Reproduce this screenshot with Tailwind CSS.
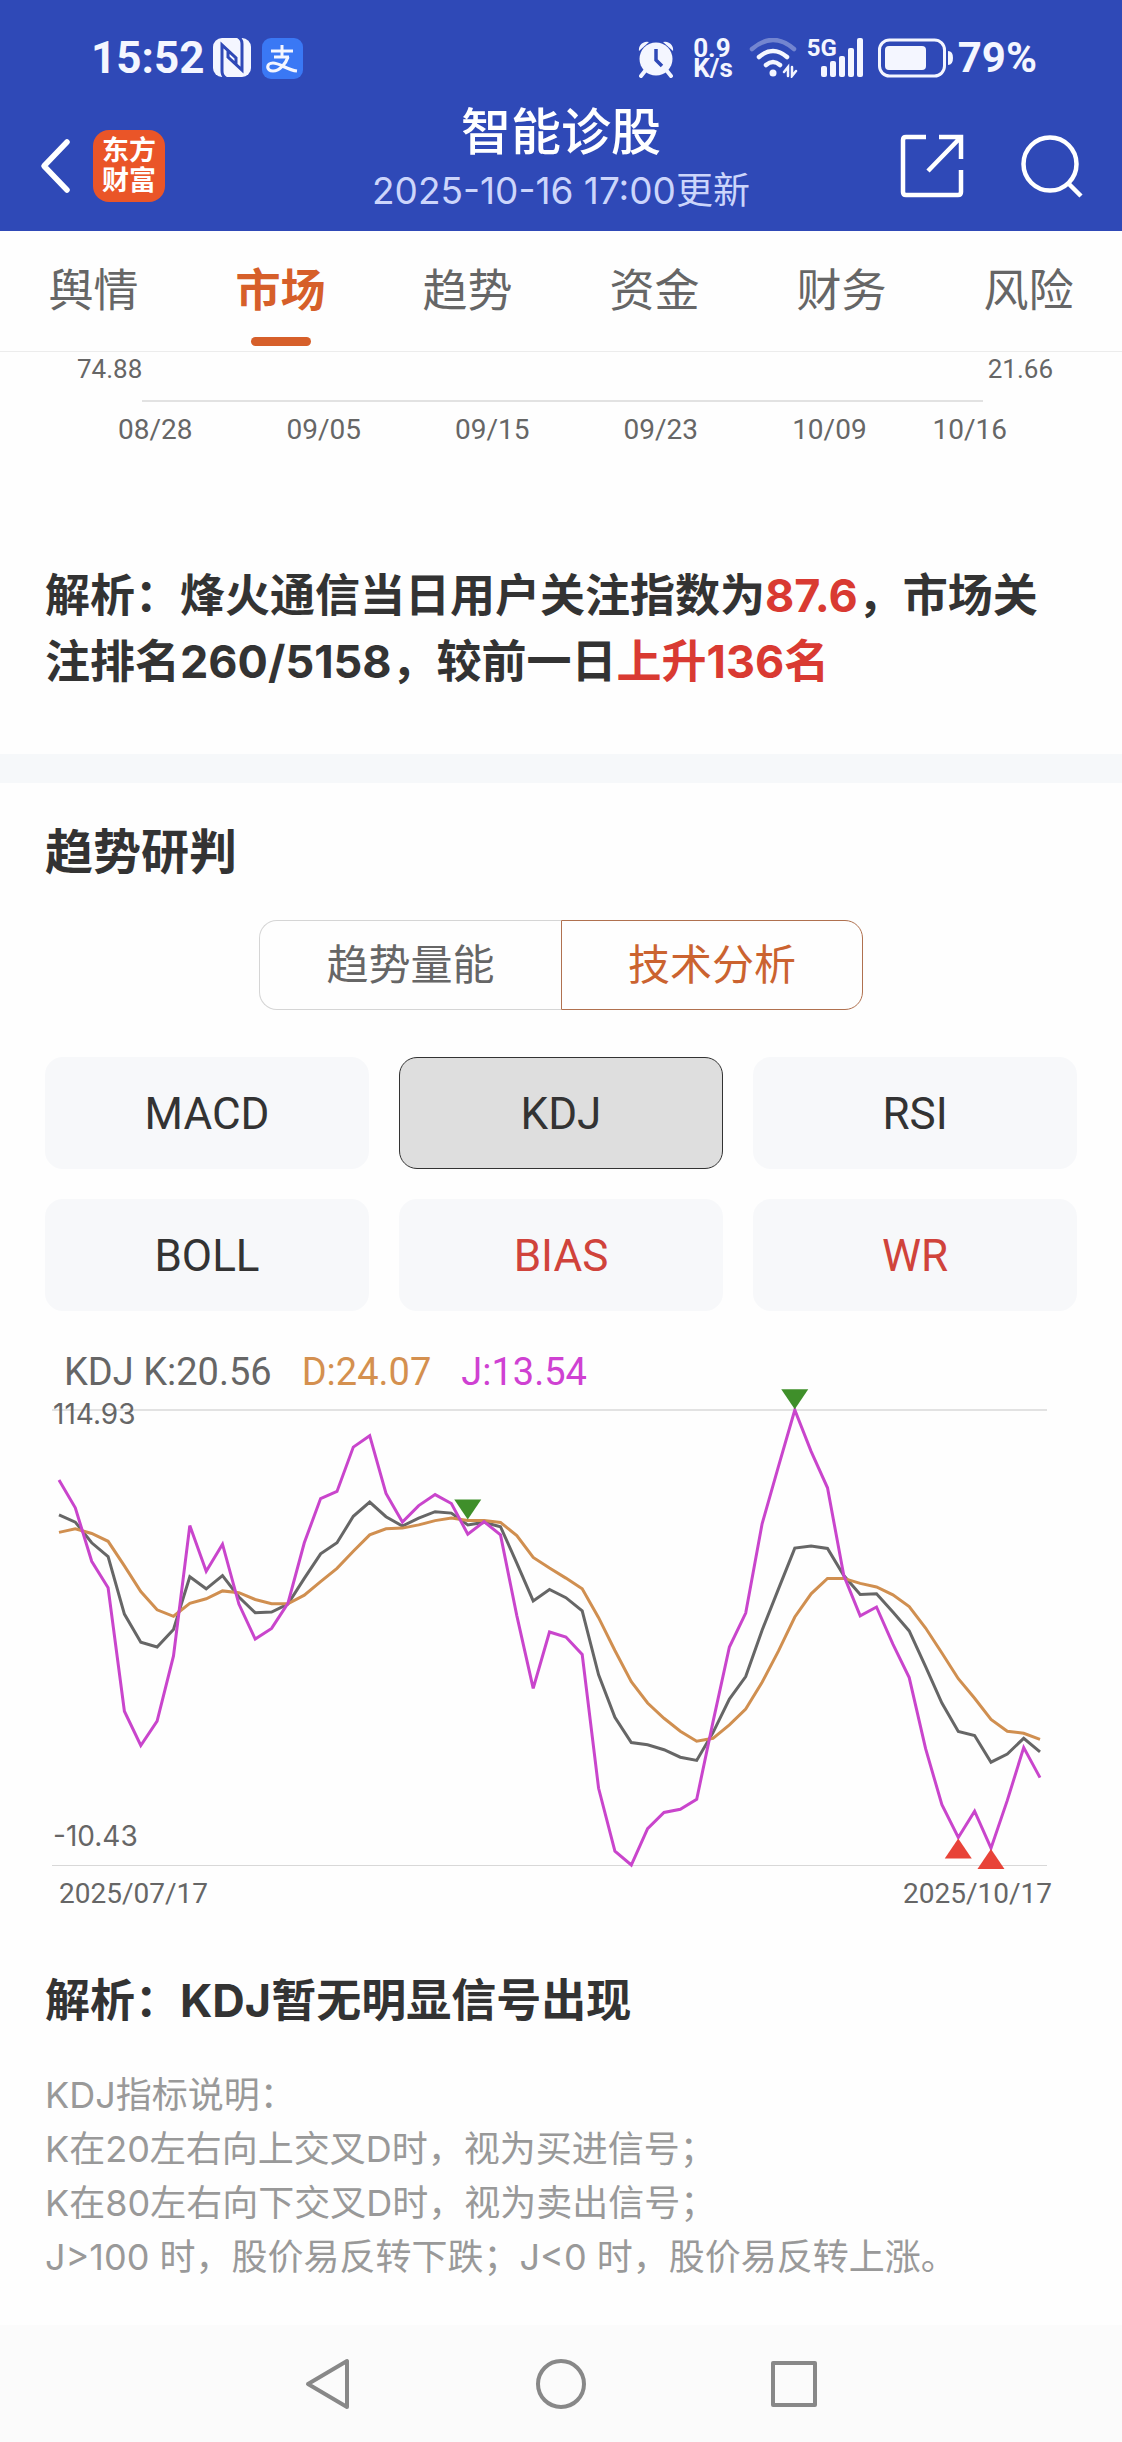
<!DOCTYPE html>
<html lang="zh-CN">

<head>
    <meta charset="UTF-8">
    <meta name="viewport" content="width=device-width, initial-scale=1.0">
    <script src="https://cdn.jsdelivr.net/npm/@tailwindcss/browser@4"></script>
    <title>智能诊股</title>
</head>

<body class="bg-[#fefefe] font-[Roboto,'Noto_Sans_CJK_SC',sans-serif] text-[#333]">
    <header class="bg-[#2f49b7] pt-9 text-white">
        <!-- status bar -->
        <div class="flex h-11 items-center justify-between pr-[85px] pl-[91px] text-[#f4f6ff]">
            <div class="flex items-center">
                <span class="text-[44px] leading-[44px] font-bold">15:52</span>
                <svg class="ml-2 h-10 w-10" viewBox="0 0 40 40">
                    <rect x="1" y="0" width="38" height="39" rx="9" fill="#f4f6ff" />
                    <path d="M14 40q-4-2-4-7V7l14 13v6M26-1q4 2 4 7v26L16 19v-6" fill="none" stroke="#2f49b7"
                        stroke-width="3" />
                </svg>
                <svg class="ml-[10px] h-[41px] w-[41px]" viewBox="0 0 41 41" fill="none" stroke="#f4f6ff">
                    <rect width="41" height="41" rx="9" fill="#3a78f5" stroke="none" />
                    <path d="M9 13h22M20 7v12M12 19h15" stroke-width="3" />
                    <path d="M26 19c-2 6-8 14-15 14-7 0-7-8 0-8 7 0 14 7 24 8" stroke-width="3.2" />
                </svg>
            </div>
            <div class="flex items-center">
                <svg class="h-10 w-9" viewBox="0 0 36 40" fill="#f4f6ff">
                    <circle cx="18" cy="21" r="16.5" />
                    <path d="M1 13a8 8 0 0 1 10-9zM35 13a8 8 0 0 0-10-9z" />
                    <path d="M7 33l-4 5M29 33l4 5" stroke="#f4f6ff" stroke-width="4" stroke-linecap="round" />
                    <path d="M18 11v11l6 6" fill="none" stroke="#2f49b7" stroke-width="3.5" />
                </svg>
                <div class="ml-[19px] text-[26px] leading-5 font-bold">
                    <div>0.9</div>
                    <div>K/s</div>
                </div>
                <svg class="ml-4 h-10 w-[50px]" viewBox="0 0 50 40" fill="none" stroke="#f4f6ff" stroke-width="4.5"
                    stroke-linecap="round">
                    <path d="M3 11q21-18 42 0" opacity=".35" />
                    <path d="M10 19q14-12 28 0M17 27q7-6 14 0" />
                    <circle cx="24" cy="35" r="3.5" fill="#f4f6ff" stroke="none" />
                    <path d="M35 34l4-5v9M43 29v9l4-5" stroke-width="2.5" />
                </svg>
                <div class="relative ml-2 h-10 w-[58px]">
                    <span class="absolute -top-1 left-0 text-2xl leading-7 font-bold">5G</span>
                    <svg class="h-10 w-[58px]" viewBox="0 0 58 40" fill="#f4f6ff">
                        <rect x="14" y="28" width="6" height="11" rx="2" />
                        <rect x="23" y="23" width="6" height="16" rx="2" />
                        <rect x="32" y="18" width="6" height="21" rx="2" />
                        <rect x="41" y="10" width="6" height="29" rx="2" />
                        <rect x="50" y="0" width="6" height="39" rx="2" />
                    </svg>
                </div>
                <svg class="ml-[13px] h-10 w-[76px]" viewBox="0 0 76 40" fill="#f4f6ff">
                    <rect x="1.5" y="2" width="65" height="36" rx="10" fill="none" stroke="#f4f6ff" stroke-width="3" />
                    <rect x="7" y="8" width="41" height="24" rx="4" />
                    <path d="M70 13q5 0 5 7t-5 7z" />
                </svg>
                <span class="ml-1 text-[42px] leading-[44px] font-bold">79%</span>
            </div>
        </div>

        <!-- title bar -->
        <div class="mt-5 grid grid-cols-[1fr_auto_1fr] items-center">
            <div class="flex items-center pl-10">
                <button type="button" aria-label="返回">
                    <svg class="h-14 w-8" viewBox="0 0 32 56" fill="none" stroke="#fff" stroke-width="5.5"
                        stroke-linecap="round" stroke-linejoin="round">
                        <path d="M27 4L4 28l23 24" />
                    </svg>
                </button>
                <div
                    class="ml-[21px] flex h-[72px] w-[72px] flex-col justify-center rounded-2xl bg-[#ea5528] text-center text-[27px] leading-[30px] font-bold">
                    <span>东方</span>
                    <span>财富</span>
                </div>
            </div>
            <div class="pt-0.5 pb-[11px] text-center font-[Inter,'Noto_Sans_CJK_SC',sans-serif]">
                <h1 class="text-[50px] leading-[60px] font-medium">智能诊股</h1>
                <p class="text-[37px] leading-[58px] text-[#ccd5fb]">2025-10-16 17:00更新</p>
            </div>
            <div class="flex items-center justify-end gap-14 pr-[38px]">
                <button type="button" aria-label="分享">
                    <svg class="h-16 w-16" viewBox="0 0 64 64" fill="none" stroke="#fff" stroke-width="4.5">
                        <path d="M26 3H6q-3 0-3 3v52q0 3 3 3h52q3 0 3-3V36" />
                        <path d="M39 3h22v22M61 3L28 37" />
                    </svg>
                </button>
                <button type="button" aria-label="搜索">
                    <svg class="h-16 w-16" viewBox="0 0 64 64" fill="none" stroke="#fff" stroke-width="4.5">
                        <circle cx="30" cy="30" r="26.5" />
                        <path d="M48 49l13 13" />
                    </svg>
                </button>
            </div>
        </div>
    </header>

    <!-- tabs -->
    <nav class="grid h-[121px] grid-cols-6 border-b border-[#ececec] text-center text-[45px] leading-[66px] text-[#666]">
        <a href="#" class="pt-7">舆情</a>
        <a href="#" class="flex flex-col items-center pt-7 font-bold text-[#d65f2a]">市场
            <span class="mt-3 h-[9px] w-[60px] rounded-full bg-[#d65f2a]"></span>
        </a>
        <a href="#" class="pt-7">趋势</a>
        <a href="#" class="pt-7">资金</a>
        <a href="#" class="pt-7">财务</a>
        <a href="#" class="pt-7">风险</a>
    </nav>

    <main>
        <section>
            <div class="flex justify-between pt-px pr-[69px] pl-[77px] text-[26px] leading-8 text-[#666]">
                <span>74.88</span>
                <span>21.66</span>
            </div>
            <div class="mt-[15px] mr-[139px] ml-[142px] h-0.5 bg-[#e2e2e2]"></div>
            <div
                class="mt-2 grid grid-cols-[3fr_3fr_3fr_3fr_3fr_2fr] pr-24 pl-[71px] text-center text-[28px] leading-10 text-[#666]">
                <span>08/28</span>
                <span>09/05</span>
                <span>09/15</span>
                <span>09/23</span>
                <span>10/09</span>
                <span>10/16</span>
            </div>
            <p class="mx-[45px] mt-[113px] font-[Inter,'Noto_Sans_CJK_SC',sans-serif] text-[45px] leading-[66px] font-bold">解析：烽火通信当日用户关注指数为<span
                    class="text-[#d93a32]">87.6</span>，市场关注排名260/5158，较前一日<span class="text-[#d93a32]">上升136名</span></p>
        </section>

        <div class="mt-[59px] h-[29px] bg-[#f6f8fa]"></div>

        <section class="px-[45px] pt-[46px]">
            <h2 class="text-[48px] leading-[48px] font-bold">趋势研判</h2>
            <div class="mx-auto mt-[43px] grid h-[90px] w-[604px] grid-cols-2 text-[42px]">
                <button type="button"
                    class="rounded-l-[18px] border border-r-0 border-[#d5d5d5] text-[#666]">趋势量能</button>
                <button type="button" class="rounded-r-[18px] border border-[#b0714f] text-[#cb6330]">技术分析</button>
            </div>
            <div class="mt-[47px] grid grid-cols-3 gap-[30px] text-[44px]">
                <button type="button" class="h-28 rounded-[18px] bg-[#f7f8fa] pt-0.5">MACD</button>
                <button type="button" class="h-28 rounded-[18px] border border-[#333] bg-[#dedede] pt-0.5">KDJ</button>
                <button type="button" class="h-28 rounded-[18px] bg-[#f7f8fa] pt-0.5">RSI</button>
                <button type="button" class="h-28 rounded-[18px] bg-[#f7f8fa] pt-0.5">BOLL</button>
                <button type="button" class="h-28 rounded-[18px] bg-[#f7f8fa] pt-0.5 text-[#d0433b]">BIAS</button>
                <button type="button" class="h-28 rounded-[18px] bg-[#f7f8fa] pt-0.5 text-[#d0433b]">WR</button>
            </div>
        </section>

        <section>
            <div class="mt-[45px] flex gap-[30px] pl-16 text-[38px] leading-8 text-[#666]">
                <span>KDJ K:20.56</span>
                <span class="text-[#d4904f]">D:24.07</span>
                <span class="text-[#cf41d2]">J:13.54</span>
            </div>
            <svg class="block w-full" viewBox="0 0 1122 484" fill="none">
                <path d="M52 22H1047" stroke="#e2e2e2" stroke-width="2" />
                <path d="M52 477.5H1047" stroke="#d8d8d8" />
                <g id="lines" stroke-width="3"></g>
                <g id="markers"></g>
                <text x="53" y="36" class="fill-[#666] font-[Inter] text-[28px]">114.93</text>
                <text x="53" y="458" class="fill-[#666] font-[Inter] text-[28px]">-10.43</text>
            </svg>
            <div class="mt-0.5 flex justify-between pr-[70px] pl-[59px] text-[28px] leading-10 text-[#666]">
                <span>2025/07/17</span>
                <span>2025/10/17</span>
            </div>
            <h3 class="mx-[45px] mt-[54px] font-[Inter,'Noto_Sans_CJK_SC',sans-serif] text-[45px] leading-[66px] font-bold">解析：KDJ暂无明显信号出现</h3>
            <p class="mx-[45px] mt-[34px] font-[Inter,'Noto_Sans_CJK_SC',sans-serif] text-4xl leading-[54px] text-[#999]">
                KDJ指标说明：<br>
                K在20左右向上交叉D时，视为买进信号；<br>
                K在80左右向下交叉D时，视为卖出信号；<br>
                J&gt;100 时，股价易反转下跌；J&lt;0 时，股价易反转上涨。
            </p>
        </section>
    </main>

    <!-- system navigation -->
    <footer class="mt-[41px] flex h-[117px] items-center justify-center gap-[181px] bg-[#fbfbfb]">
        <button type="button" aria-label="后退">
            <svg class="h-[52px] w-[52px]" viewBox="0 0 52 52" fill="none" stroke="#888" stroke-width="4"
                stroke-linejoin="round">
                <path d="M45 3v46L6 26z" />
            </svg>
        </button>
        <button type="button" aria-label="主页">
            <svg class="h-[52px] w-[52px]" viewBox="0 0 52 52" fill="none" stroke="#888" stroke-width="4">
                <circle cx="26" cy="26" r="23" />
            </svg>
        </button>
        <button type="button" aria-label="最近任务">
            <svg class="h-[52px] w-[52px]" viewBox="0 0 52 52" fill="none" stroke="#888" stroke-width="4"
                stroke-linejoin="round">
                <rect x="5" y="5" width="42" height="42" />
            </svg>
        </button>
    </footer>

    <script>
        const K = [490, 510, 568, 607, 768, 847, 860, 811, 663, 697, 660, 720, 764, 762, 740, 668, 599, 568, 494, 454,
            495, 521, 499, 481, 485, 518, 511, 523, 625, 731, 699, 722, 759, 938, 1057, 1128, 1134, 1148, 1169, 1178,
            1100, 1006, 943, 813, 698, 583, 577, 584, 660, 713, 711, 762, 815, 915, 1017, 1097, 1108, 1183, 1160, 1116, 1154];
        const D = [539, 529, 542, 564, 633, 705, 756, 774, 738, 725, 703, 708, 727, 739, 739, 715, 677, 640, 592, 546,
            529, 527, 518, 506, 499, 506, 506, 511, 548, 609, 639, 667, 697, 778, 870, 957, 1017, 1060, 1096, 1124,
            1116, 1078, 1034, 959, 872, 776, 711, 668, 668, 682, 692, 714, 747, 807, 877, 949, 1004, 1063, 1096, 1102, 1119];
        const J = [392, 470, 620, 694, 1040, 1136, 1068, 885, 520, 648, 572, 740, 838, 808, 738, 568, 444, 424, 300, 268,
            430, 510, 464, 433, 458, 544, 509, 546, 772, 976, 818, 832, 881, 1256, 1432, 1471, 1369, 1324, 1315, 1287,
            1070, 860, 765, 515, 355, 196, 312, 414, 660, 773, 748, 852, 946, 1145, 1302, 1394, 1320, 1424, 1290, 1142, 1226];
        const HIGH = 196, LOW = 1471;

        const toX = i => 59 + i * 16.35;
        const toY = v => 22 + (v - HIGH) * 455 / (LOW - HIGH);

        function add(parent, tag, attrs) {
            const el = document.createElementNS('http://www.w3.org/2000/svg', tag);
            for (const name in attrs) el.setAttribute(name, attrs[name]);
            document.getElementById(parent).appendChild(el);
        }

        // K, D and J curves
        [[K, '#666'], [D, '#d08f50'], [J, '#c945cc']].forEach(([data, color]) => {
            const points = data.map((v, i) => toX(i).toFixed(1) + ',' + toY(v).toFixed(1)).join(' ');
            add('lines', 'polyline', { points: points, stroke: color });
        });

        // sell signals point down, buy signals point up
        [[25, 503, -20, '#3f8f2a'], [45, 194, -20, '#3f8f2a'], [55, 1397, 20, '#e84338'], [57, 1426, 20, '#e84338']].forEach(([i, v, h, color]) => {
            const x = toX(i), y = toY(v);
            add('markers', 'path', { d: `M${x} ${y}l13.5 ${h}h-27z`, fill: color });
        });
    </script>
</body>

</html>
